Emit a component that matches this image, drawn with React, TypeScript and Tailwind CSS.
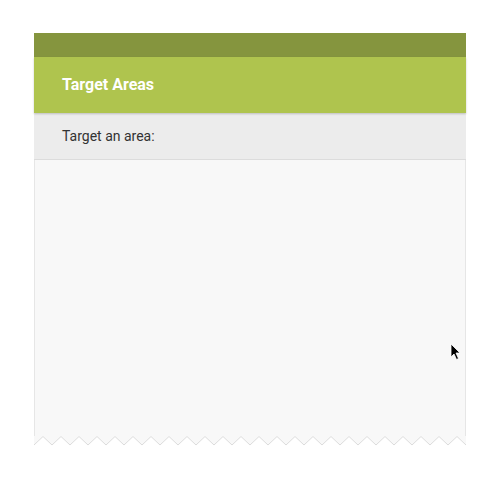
const teeth = 24;

const Zigzag = () => {
  const w = 432;
  const step = w / teeth;
  let d = `M0 0 L0 9`;
  for (let i = 0; i < teeth; i++) {
    d += ` L${i * step + step / 2} 0 L${(i + 1) * step} 9`;
  }
  d += ` L${w} 0 Z`;
  let line = `M0 9`;
  for (let i = 0; i < teeth; i++) {
    line += ` L${i * step + step / 2} 0.5 L${(i + 1) * step} 9`;
  }
  return (
    <svg width={w} height={10} viewBox={`0 0 ${w} 10`} className="block">
      <path d={d} fill="#f8f8f8" />
      <path d={line} fill="none" stroke="#dcdcdc" strokeWidth={1} />
    </svg>
  );
};

const Cursor = () => (
  <svg width="12" height="18" viewBox="0 0 12 18" className="absolute left-[415px] top-[183px]">
    <path d="M1 1 L1 14 L4 11 L6.5 16.5 L8.5 15.5 L6 10 L10 10 Z" fill="#000" stroke="#fff" strokeWidth="0.8" />
  </svg>
);

export default function App() {
  return (
    <div className="w-[500px] h-[489px] bg-white pt-[33px] px-[34px] font-['Roboto',sans-serif]">
      <div className="w-[432px]">
        <div className="h-[24px] bg-[#85953e]" />
        <div className="h-[56px] bg-[#afc44e] flex items-center pl-[28px] text-white text-[16px] font-bold shadow-[0_1px_2px_rgba(0,0,0,0.2)] relative z-10">
          Target Areas
        </div>
        <div className="h-[47px] bg-[#ececec] border-b border-[#dcdcdc] flex items-center pl-[28px] text-[14px] text-[#333]">
          Target an area:
        </div>
        <div className="relative h-[276px] bg-[#f8f8f8] border-x border-[#e6e6e6]">
          <Cursor />
        </div>
        <Zigzag />
      </div>
    </div>
  );
}
